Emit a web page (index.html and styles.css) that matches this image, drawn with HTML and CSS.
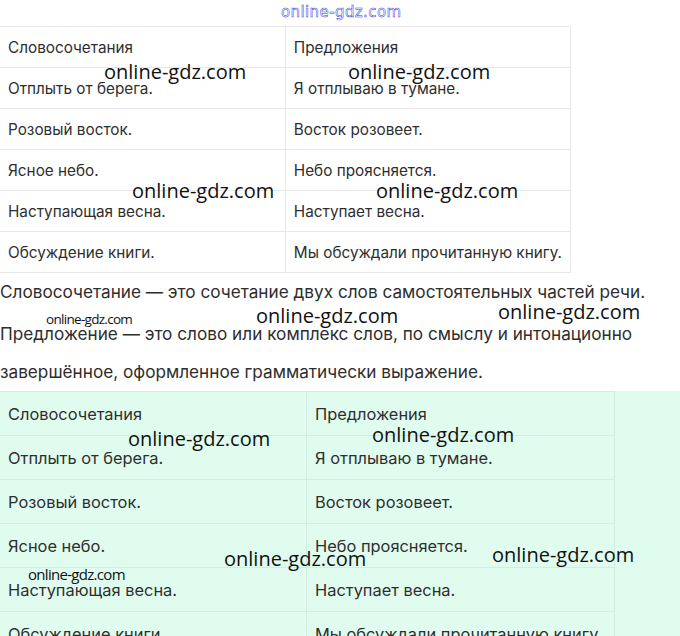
FILE: index.html
```html
<!DOCTYPE html>
<html lang="ru">

<head>
    <meta charset="UTF-8">
    <meta name="viewport" content="width=device-width, initial-scale=1.0">
    <title>Словосочетание и предложение</title>
    <link rel="stylesheet" href="styles.css">
</head>

<body>
    <div class="page">
        <div class="top-logo">online-gdz.com</div>

        <table class="grid grid-plain">
            <tr><td>Словосочетания</td><td>Предложения</td></tr>
            <tr><td>Отплыть от берега.</td><td>Я отплываю в тумане.</td></tr>
            <tr><td>Розовый восток.</td><td>Восток розовеет.</td></tr>
            <tr><td>Ясное небо.</td><td>Небо проясняется.</td></tr>
            <tr><td>Наступающая весна.</td><td>Наступает весна.</td></tr>
            <tr><td>Обсуждение книги.</td><td>Мы обсуждали прочитанную книгу.</td></tr>
        </table>

        <p class="text first">Словосочетание — это сочетание двух слов самостоятельных частей речи.</p>
        <p class="text">Предложение — это слово или комплекс слов, по смыслу и интонационно завершённое, оформленное грамматически выражение.</p>

        <div class="answer">
            <table class="grid grid-green">
                <tr><td>Словосочетания</td><td>Предложения</td></tr>
                <tr><td>Отплыть от берега.</td><td>Я отплываю в тумане.</td></tr>
                <tr><td>Розовый восток.</td><td>Восток розовеет.</td></tr>
                <tr><td>Ясное небо.</td><td>Небо проясняется.</td></tr>
                <tr><td>Наступающая весна.</td><td>Наступает весна.</td></tr>
                <tr><td>Обсуждение книги.</td><td>Мы обсуждали прочитанную книгу.</td></tr>
            </table>
        </div>

        <!-- watermarks -->
        <span class="wm" style="left:104px;top:60px">online-gdz.com</span>
        <span class="wm" style="left:348px;top:60px">online-gdz.com</span>
        <span class="wm" style="left:132px;top:179px">online-gdz.com</span>
        <span class="wm" style="left:376px;top:179px">online-gdz.com</span>
        <span class="wm" style="left:256px;top:304px">online-gdz.com</span>
        <span class="wm" style="left:498px;top:300px">online-gdz.com</span>
        <span class="wm" style="left:128px;top:427px">online-gdz.com</span>
        <span class="wm" style="left:372px;top:423px">online-gdz.com</span>
        <span class="wm" style="left:224px;top:547px">online-gdz.com</span>
        <span class="wm" style="left:492px;top:543px">online-gdz.com</span>
        <span class="wm wm-small" style="left:46px;top:311px">online-gdz.com</span>
        <span class="wm wm-small wm-mid" style="left:28px;top:566px">online-gdz.com</span>
    </div>
</body>

</html>
```

FILE: styles.css
```css
body {
    margin: 0;
    font-family: Inter, "Noto Sans", sans-serif;
    color: #2e2e2e;
    background-color: #fff;
}

.page {
    position: relative;
    width: 680px;
    height: 636px;
    overflow: hidden;
}

.top-logo {
    height: 26px;
    padding-left: 281px;
    font-family: "DejaVu Sans", sans-serif;
    font-size: 15px;
    line-height: 24px;
    color: #fff;
    -webkit-text-stroke: 0.5px #3b3be8;
    letter-spacing: 0.4px;
}

.grid {
    border-collapse: collapse;
}

.grid td {
    padding: 0 8px;
    vertical-align: middle;
    white-space: nowrap;
}

.grid-plain {
    width: 571px;
    font-size: 15.3px;
}

.grid-plain td {
    height: 40px;
    border: 1px solid #e8e8e8;
}

.grid-plain td:first-child {
    width: 269px;
    border-left: none;
}

.text {
    margin: 0;
    font-size: 17.2px;
    line-height: 38px;
    width: 670px;
}

.text.first {
    margin-bottom: 4px;
}

.answer {
    background-color: #e0fcee;
}

.grid-green {
    width: 615px;
    font-size: 16.4px;
}

.grid-green td {
    height: 43px;
    border: 1px solid #d3ecdf;
}

.grid-green td:first-child {
    width: 290px;
    border-left: none;
}

.wm {
    position: absolute;
    font-family: "Open Sans", sans-serif;
    font-size: 20px;
    font-weight: 500;
    line-height: 24px;
    color: #111;
    white-space: nowrap;
}

.wm-small {
    font-size: 13.5px;
    font-weight: 400;
    line-height: 16px;
    letter-spacing: -0.7px;
}

.wm-mid {
    font-size: 15px;
}
```
